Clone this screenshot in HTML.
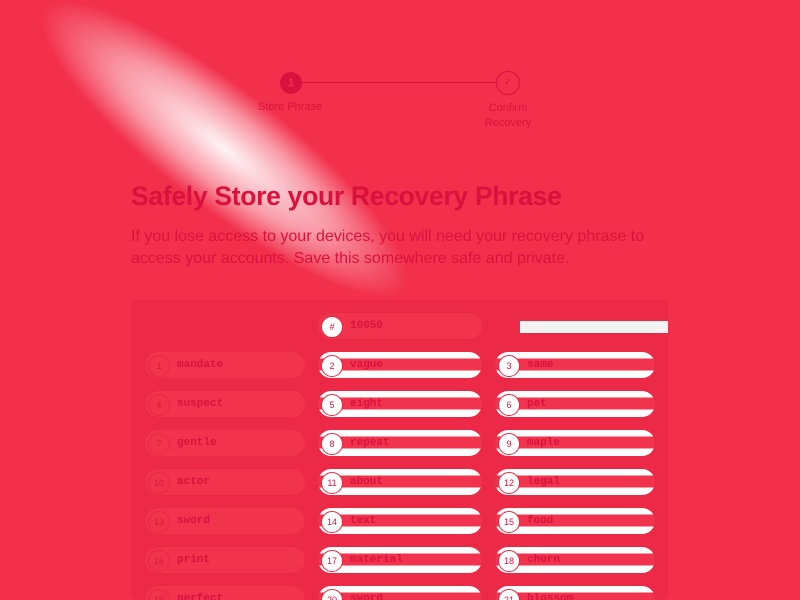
<!DOCTYPE html>
<html><head><style>
html,body{margin:0;width:800px;height:600px;overflow:hidden}
body{background:#f2304b;font-family:"Liberation Sans",sans-serif;position:relative}
.t{position:absolute;color:#d8123d}
.pill{position:absolute;height:26px;border-radius:13px;background:#f2334d;box-shadow:0 0 0 1px #ea2a45}
.pill .n{position:absolute;left:3px;top:3px;width:20px;height:20px;border-radius:50%;border:1px solid #e42843;font-size:9px;color:#d41a3c;text-align:center;line-height:20px}
.pill .w{position:absolute;left:32px;top:0;line-height:26px;font-family:"Liberation Mono",monospace;font-weight:bold;font-size:11px;color:#d8123d}
.g{background:linear-gradient(#fff 0 25%,#f2334d 25% 72%,#fff 72%)}
</style></head><body>
<div style="position:absolute;left:80px;top:-40px;width:460px;height:120px;transform:rotate(38deg);transform-origin:0 0;background:radial-gradient(ellipse at center,rgba(255,255,255,.95),rgba(255,255,255,.5) 40%,rgba(255,255,255,0) 70%)"></div>
<div style="position:absolute;left:280px;top:72px;width:22px;height:22px;border-radius:50%;background:#d8123d;color:#f2304b;font-size:11px;font-weight:bold;text-align:center;line-height:22px">1</div>
<div style="position:absolute;left:302px;top:82px;width:194px;height:1px;background:#d8123d"></div>
<div style="position:absolute;left:496px;top:71px;width:22px;height:22px;border-radius:50%;border:1px solid #d8123d;color:#d8123d;font-size:10px;text-align:center;line-height:22px">✓</div>
<div class="t" style="left:258px;top:101px;font-size:11px">Store Phrase</div>
<div class="t" style="left:478px;top:101px;font-size:11px;text-align:center;width:60px;line-height:15px">Confirm Recovery</div>
<div class="t" style="left:131px;top:181px;font-size:26.5px;font-weight:bold;letter-spacing:-0.3px">Safely Store your Recovery Phrase</div>
<div class="t" style="left:131px;top:226px;font-size:16px;line-height:22px;width:520px">If you lose access to your devices, you will need your recovery phrase to access your accounts. Save this somewhere safe and private.</div>
<div style="position:absolute;left:131px;top:300px;width:537px;height:300px;background:#ec2a47;border-radius:6px"></div>
<div class="pill" style="left:318px;top:313px;width:164px"><div class="n" style="background:#fff">#</div><div class="w">10050</div></div>
<div style="position:absolute;left:520px;top:321px;width:148px;height:12px;background:#f3f3f3"></div>
<div id="rows"></div>
<script>
var L=["mandate","suspect","gentle","actor","sword","print","perfect"],M=["vague","eight","repeat","about","text","material","sword"],R=["same","pet","maple","legal","food","churn","blossom"],h="";
for(var i=0;i<7;i++){var y=352+i*39;
h+='<div class="pill" style="left:145px;top:'+y+'px;width:160px"><div class="n">'+(i*3+1)+'</div><div class="w">'+L[i]+'</div></div>';
h+='<div class="pill g" style="left:318px;top:'+y+'px;width:164px"><div class="n" style="background:#fff">'+(i*3+2)+'</div><div class="w">'+M[i]+'</div></div>';
h+='<div class="pill g" style="left:495px;top:'+y+'px;width:160px"><div class="n" style="background:#fff">'+(i*3+3)+'</div><div class="w">'+R[i]+'</div></div>';}
document.getElementById("rows").innerHTML=h;
</script>
</body></html>
